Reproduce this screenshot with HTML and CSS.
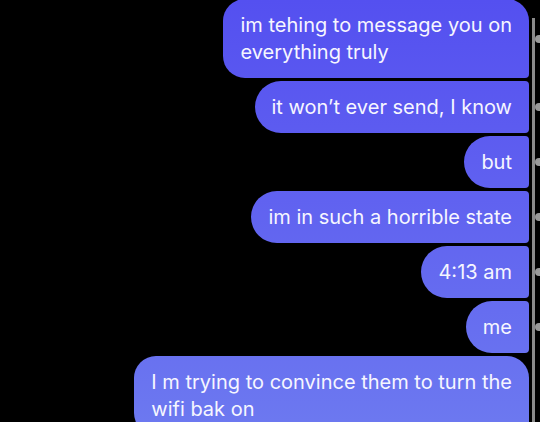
FILE: index.html
```html
<!DOCTYPE html>
<html lang="en">
<head>
    <meta charset="UTF-8">
    <meta name="viewport" content="width=device-width, initial-scale=1.0">
    <title>Messages</title>
    <link rel="stylesheet" href="styles.css">
</head>
<body>
    <div class="thread">
        <!-- Mensajes enviados -->
        <div class="msg">
            <div class="bubble first">im tehing to message you on<br>everything truly</div>
            <span class="mark"></span>
        </div>
        <div class="msg">
            <div class="bubble">it won’t ever send, I know</div>
            <span class="mark"></span>
        </div>
        <div class="msg">
            <div class="bubble">but</div>
            <span class="mark"></span>
        </div>
        <div class="msg">
            <div class="bubble">im in such a horrible state</div>
            <span class="mark"></span>
        </div>
        <div class="msg">
            <div class="bubble">4:13 am</div>
            <span class="mark"></span>
        </div>
        <div class="msg">
            <div class="bubble">me</div>
            <span class="mark"></span>
        </div>
        <div class="msg">
            <div class="bubble first">I m trying to convince them to turn the<br>wifi bak on</div>
            <span class="mark empty"></span>
        </div>
    </div>
</body>
</html>
```

FILE: styles.css
```css
body {
    margin: 0;
    padding: 0;
    background-color: #000;
    font-family: Inter, "Noto Sans", sans-serif;
    overflow: hidden;
}
.thread {
    position: relative;
    display: flex;
    flex-direction: column;
    align-items: stretch;
    gap: 3px;
    margin-top: -1px;
}
.thread::before {
    content: "";
    position: absolute;
    top: 19px;
    bottom: -200px;
    right: 5px;
    width: 3px;
    background-color: #8a8a8a;
}
.msg {
    display: flex;
    justify-content: flex-end;
    align-items: center;
}
.bubble {
    color: #f6f6ff;
    font-size: 20px;
    line-height: 27px;
    padding: 12.5px 17px;
    white-space: nowrap;
    border-radius: 26px 4px 4px 26px;
    background: linear-gradient(to bottom, #5450f0 0px, #5e5ef0 160px, #6c78f0 422px);
    background-attachment: fixed;
}
.bubble.first {
    border-radius: 22px 22px 4px 22px;
}
.mark {
    position: relative;
    width: 11px;
    align-self: stretch;
}
.mark::after {
    content: "";
    position: absolute;
    top: 50%;
    left: 6px;
    width: 8px;
    height: 8px;
    margin-top: -4px;
    border-radius: 50%;
    background-color: #9a9a9a;
}
.mark.empty::after {
    display: none;
}
```
